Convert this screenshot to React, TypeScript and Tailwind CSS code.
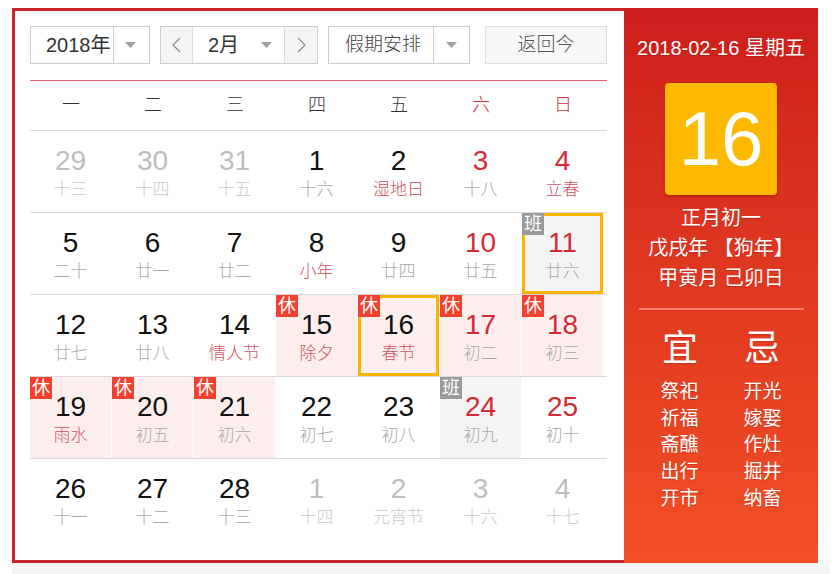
import React from "react";

type Day = {
  d: number;
  l: string;
  other?: boolean; // prev / next month
  wk?: boolean; // weekend, red number
  fest?: boolean; // festival text
  tag?: "rest" | "work";
  sel?: boolean;
};

const rows: Day[][] = [
  [
    { d: 29, l: "十三", other: true },
    { d: 30, l: "十四", other: true },
    { d: 31, l: "十五", other: true },
    { d: 1, l: "十六" },
    { d: 2, l: "湿地日", fest: true },
    { d: 3, l: "十八", wk: true },
    { d: 4, l: "立春", wk: true, fest: true },
  ],
  [
    { d: 5, l: "二十" },
    { d: 6, l: "廿一" },
    { d: 7, l: "廿二" },
    { d: 8, l: "小年", fest: true },
    { d: 9, l: "廿四" },
    { d: 10, l: "廿五", wk: true },
    { d: 11, l: "廿六", wk: true, tag: "work", sel: true },
  ],
  [
    { d: 12, l: "廿七" },
    { d: 13, l: "廿八" },
    { d: 14, l: "情人节", fest: true },
    { d: 15, l: "除夕", fest: true, tag: "rest" },
    { d: 16, l: "春节", fest: true, tag: "rest", sel: true },
    { d: 17, l: "初二", wk: true, tag: "rest" },
    { d: 18, l: "初三", wk: true, tag: "rest" },
  ],
  [
    { d: 19, l: "雨水", fest: true, tag: "rest" },
    { d: 20, l: "初五", tag: "rest" },
    { d: 21, l: "初六", tag: "rest" },
    { d: 22, l: "初七" },
    { d: 23, l: "初八" },
    { d: 24, l: "初九", wk: true, tag: "work" },
    { d: 25, l: "初十", wk: true },
  ],
  [
    { d: 26, l: "十一" },
    { d: 27, l: "十二" },
    { d: 28, l: "十三" },
    { d: 1, l: "十四", other: true },
    { d: 2, l: "元宵节", other: true },
    { d: 3, l: "十六", other: true },
    { d: 4, l: "十七", other: true },
  ],
];

const weekdays = ["一", "二", "三", "四", "五", "六", "日"];
const yi = ["祭祀", "祈福", "斋醮", "出行", "开市"];
const ji = ["开光", "嫁娶", "作灶", "掘井", "纳畜"];

function Caret() {
  return (
    <svg width="11" height="6" viewBox="0 0 11 6">
      <path d="M0 0h11L5.5 6z" fill="#a0a0a0" />
    </svg>
  );
}

function Chevron({ dir }: { dir: "l" | "r" }) {
  return (
    <svg width="9" height="16" viewBox="0 0 9 16">
      <path
        d={dir === "l" ? "M8 1L1 8l7 7" : "M1 1l7 7-7 7"}
        fill="none"
        stroke="#888"
        strokeWidth="1.2"
      />
    </svg>
  );
}

function Cell({ day }: { day: Day }) {
  const bg =
    day.tag === "rest" ? "bg-[#fdeeee]" : day.tag === "work" ? "bg-[#f4f4f4]" : "bg-white";
  const num = day.other ? "text-[#bdbdbd]" : day.wk ? "text-[#d42a35]" : "text-[#111]";
  const lunar = day.other ? "text-[#cccccc]" : day.fest ? "text-[#cc5560]" : "text-[#a8a8a8]";
  return (
    <div className={`relative flex flex-col items-center border-r border-white pt-[16px] ${bg}`}>
      {day.sel && <div className="absolute inset-0 border-[3px] border-[#f8b600]" />}
      {day.tag && (
        <div
          className={`absolute left-0 top-0 z-10 w-[22px] h-[22px] text-center text-[18px] leading-[22px] text-white ${
            day.tag === "rest" ? "bg-[#f2412f]" : "bg-[#9a9a9a]"
          }`}
        >
          {day.tag === "rest" ? "休" : "班"}
        </div>
      )}
      <div className={`text-[28px] leading-[28px] ${num}`}>{day.d}</div>
      <div className={`mt-[6px] text-[17px] font-light leading-[18px] ${lunar}`}>{day.l}</div>
    </div>
  );
}

export default function App() {
  return (
    <div className="min-h-[574px] bg-white pt-[8px] font-['Liberation_Sans','Noto_Sans_CJK_SC',sans-serif]">
      <div className="ml-[12px] flex">
        {/* calendar */}
        <div className="w-[612px] h-[555px] border-[3px] border-r-0 border-[#c9252b] pl-[15px] pt-[15px]">
          {/* toolbar */}
          <div className="flex h-[38px] text-[19px] text-[#333]">
            <div className="flex w-[120px] border border-[#ccc]">
              <div className="flex w-[82px] items-center pl-[15px] text-[20px]">2018年</div>
              <div className="flex flex-1 items-center justify-center border-l border-[#ccc] pr-[3px]">
                <Caret />
              </div>
            </div>
            <div className="ml-[10px] flex w-[158px] border border-[#ccc]">
              <div className="flex w-[32px] items-center justify-center border-r border-[#ddd] bg-[#f5f5f5]">
                <Chevron dir="l" />
              </div>
              <div className="flex flex-1 items-center pl-[15px]">
                <span className="text-[20px]">2月</span>
                <span className="ml-[22px] flex">
                  <Caret />
                </span>
              </div>
              <div className="flex w-[33px] items-center justify-center border-l border-[#ddd] bg-[#f5f5f5]">
                <Chevron dir="r" />
              </div>
            </div>
            <div className="ml-[10px] flex w-[142px] border border-[#ccc]">
              <div className="flex w-[104px] items-center pl-[16px] font-light text-[#444]">假期安排</div>
              <div className="flex flex-1 items-center justify-center border-l border-[#ccc]">
                <Caret />
              </div>
            </div>
            <div className="ml-[15px] flex w-[122px] items-center justify-center border border-[#ddd] bg-[#f7f7f7] font-light text-[#555]">
              返回今
            </div>
          </div>

          {/* grid */}
          <div className="mt-[16px] w-[577px]">
            <div className="grid h-[50px] grid-cols-[repeat(7,82px)] items-center border-t border-[#e46060] text-[18px] font-light">
              {weekdays.map((w, i) => (
                <div key={w} className={`text-center ${i >= 5 ? "text-[#d4343c]" : "text-[#333]"}`}>
                  {w}
                </div>
              ))}
            </div>
            {rows.map((r, i) => (
              <div key={i} className="grid h-[82px] grid-cols-[repeat(7,82px)] border-t border-[#d9d9d9]">
                {r.map((day, j) => (
                  <Cell key={j} day={day} />
                ))}
              </div>
            ))}
          </div>
        </div>

        {/* detail panel */}
        <div className="flex w-[194px] h-[555px] flex-col items-center bg-linear-to-b from-[#cd1e1c] to-[#f34f25] pt-[28px] text-white [text-shadow:0_1px_1px_rgba(120,0,0,0.25)]">
          <div className="text-[20px] leading-[24px]">2018-02-16 星期五</div>
          <div className="mt-[23px] flex h-[112px] w-[112px] items-center justify-center rounded-[4px] bg-[#fdb800] text-[76px] leading-none shadow-[0_2px_3px_rgba(120,0,0,0.35)] [text-shadow:none]">
            16
          </div>
          <div className="mt-[8px] flex flex-col items-center text-[20px] leading-[30px]">
            <div>正月初一</div>
            <div>戊戌年 【狗年】</div>
            <div>甲寅月 己卯日</div>
          </div>
          <div className="mt-[15px] h-[2px] w-[165px] bg-[#f2806c]" />
          <div className="mt-[19px] flex gap-[46px] text-[36px] leading-[40px]">
            <div>宜</div>
            <div>忌</div>
          </div>
          <div className="mt-[10px] flex gap-[45px] text-[19px] leading-[26.7px]">
            <div className="flex flex-col">
              {yi.map((t) => (
                <div key={t}>{t}</div>
              ))}
            </div>
            <div className="flex flex-col">
              {ji.map((t) => (
                <div key={t}>{t}</div>
              ))}
            </div>
          </div>
        </div>
      </div>
      <div className="ml-[12px] h-[11px] w-[818px] bg-[#f4f5f7]" />
    </div>
  );
}
